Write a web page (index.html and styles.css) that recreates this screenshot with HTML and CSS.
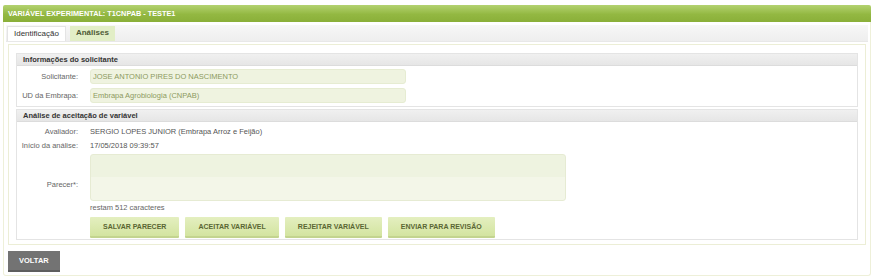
FILE: index.html
```html
<!DOCTYPE html>
<html lang="pt">
<head>
<meta charset="utf-8">
<link rel="stylesheet" href="styles.css">
</head>
<body>
<div class="page">
  <div class="titlebar">VARIÁVEL EXPERIMENTAL: T1CNPAB - TESTE1</div>
  <div class="panel">
    <div class="tabs">
      <span class="tab active">Identificação</span>
      <span class="tab green">Análises</span>
    </div>
    <div class="content">
      <div class="section">
        <div class="section-head">Informações do solicitante</div>
        <div class="section-body">
          <div class="row">
            <span class="label">Solicitante:</span>
            <span class="field">JOSE ANTONIO PIRES DO NASCIMENTO</span>
          </div>
          <div class="row">
            <span class="label">UD da Embrapa:</span>
            <span class="field">Embrapa Agrobiologia (CNPAB)</span>
          </div>
        </div>
      </div>
      <div class="section">
        <div class="section-head">Análise de aceitação de variável</div>
        <div class="section-body compact">
          <div class="row plain">
            <span class="label">Avaliador:</span>
            <span class="value">SERGIO LOPES JUNIOR (Embrapa Arroz e Feijão)</span>
          </div>
          <div class="row plain">
            <span class="label">Início da análise:</span>
            <span class="value">17/05/2018 09:39:57</span>
          </div>
          <div class="row area-row">
            <span class="label">Parecer*:</span>
            <div class="area-col">
              <div class="textarea"></div>
              <div class="counter">restam 512 caracteres</div>
              <div class="buttons">
                <span class="btn">SALVAR PARECER</span>
                <span class="btn">ACEITAR VARIÁVEL</span>
                <span class="btn">REJEITAR VARIÁVEL</span>
                <span class="btn">ENVIAR PARA REVISÃO</span>
              </div>
            </div>
          </div>
        </div>
      </div>
    </div>
    <div class="footer">
      <span class="btn-dark">VOLTAR</span>
    </div>
  </div>
</div>
</body>
</html>
```

FILE: styles.css
```css
* { box-sizing: border-box; }
html, body { margin: 0; padding: 0; background: #ffffff; }
body {
  font-family: "Liberation Sans", Arial, sans-serif;
  font-size: 7.5px;
  color: #555;
}
.page { padding: 5px 3px 0 3px; }
.titlebar {
  height: 17px;
  line-height: 17px;
  padding-left: 5px;
  color: #fff;
  font-weight: bold;
  font-size: 7.3px;
  background: linear-gradient(#b3d270, #93b842 55%, #8aaf39);
  border-radius: 2px 2px 0 0;
}
.panel {
  border: 1px solid #eef0d9;
  border-top: none;
  border-radius: 0 0 3px 3px;
  padding: 3px 2px 3px 2px;
  background: #fff;
}
.tabs {
  display: flex;
  gap: 4px;
  height: 17px;
  padding: 0 0 0 1px;
  align-items: flex-end;
  background: linear-gradient(#f7f7f7, #eeeeee);
  border-bottom: 1px solid #e8e8e8;
}
.tab {
  height: 15px;
  line-height: 14px;
  padding: 0 6px;
  font-size: 8px;
  color: #333;
}
.tab.active {
  background: #fff;
  border: 1px solid #e4e4e4;
  border-bottom: none;
}
.tab.green {
  background: #e2eec6;
  color: #4f5a35;
  font-weight: bold;
}
.content {
  margin: 2px 2px 0 2px;
  border: 1px solid #eceed6;
  padding: 8px 7px 4px 7px;
}
.section {
  border: 1px solid #e4e4e4;
  margin-bottom: 2px;
}
.section:last-child { margin-bottom: 0; }
.section-head {
  height: 12px;
  line-height: 12px;
  padding-left: 6px;
  font-weight: bold;
  color: #333;
  background: linear-gradient(#f0f0f0, #e6e6e6);
  border-bottom: 1px solid #dcdcdc;
}
.section-body { padding: 3px 0 3px 0; }
.section-body.compact { padding: 2px 0 1px 0; }
.row {
  display: flex;
  align-items: center;
  margin-bottom: 4px;
}
.row:last-child { margin-bottom: 0; }
.row.plain { height: 14px; margin-bottom: 0; }
.label {
  width: 73px;
  flex: none;
  text-align: right;
  padding-right: 12px;
  color: #666;
}
.field {
  width: 316px;
  height: 15px;
  line-height: 14px;
  padding-left: 2px;
  background: #eff3e0;
  border: 1px solid #e6ecd2;
  border-radius: 3px;
  color: #8c9a5e;
}
.value { color: #555; }
.area-row { align-items: flex-start; margin-top: 2px; }
.area-row .label { padding-top: 26px; }
.area-col { display: flex; flex-direction: column; }
.textarea {
  width: 476px;
  height: 47px;
  background: linear-gradient(#eef3e0 50%, #f3f6e8 50%);
  border: 1px solid #e6ebd3;
  border-radius: 3px;
}
.counter { margin-top: 2px; height: 10px; line-height: 10px; color: #666; }
.buttons { display: flex; gap: 6px; margin-top: 4px; }
.btn {
  height: 21px;
  line-height: 20px;
  padding: 0 13px;
  font-weight: bold;
  font-size: 7px;
  color: #5a6633;
  background: linear-gradient(#e4efc0, #d3e4a0);
  border-bottom: 2px solid #c3d48f;
  border-radius: 1px;
}
.footer { padding: 6px 2px 0 2px; }
.btn-dark {
  display: inline-block;
  height: 21px;
  line-height: 20px;
  padding: 0 11px;
  font-weight: bold;
  font-size: 7.5px;
  color: #fff;
  background: #737373;
  border-bottom: 2px solid #5e5e5e;
}
```
